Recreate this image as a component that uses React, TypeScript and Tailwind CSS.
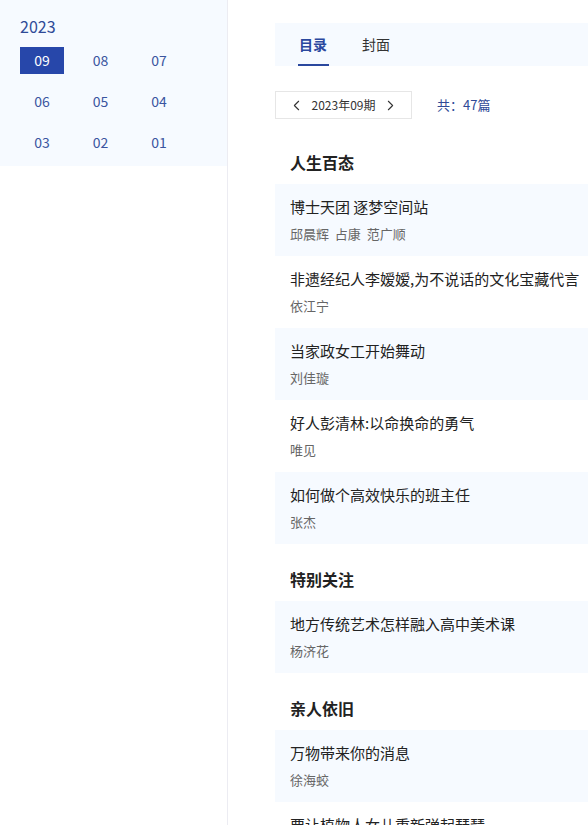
import { ChevronLeft, ChevronRight } from 'lucide-react';

const months = ['09', '08', '07', '06', '05', '04', '03', '02', '01'];

const sections = [
  {
    name: '人生百态',
    items: [
      { title: '博士天团 逐梦空间站', author: '邱晨辉  占康  范广顺' },
      { title: '非遗经纪人李嫒嫒,为不说话的文化宝藏代言', author: '依江宁' },
      { title: '当家政女工开始舞动', author: '刘佳璇' },
      { title: '好人彭清林:以命换命的勇气', author: '唯见' },
      { title: '如何做个高效快乐的班主任', author: '张杰' },
    ],
  },
  {
    name: '特别关注',
    items: [{ title: '地方传统艺术怎样融入高中美术课', author: '杨济花' }],
  },
  {
    name: '亲人依旧',
    items: [
      { title: '万物带来你的消息', author: '徐海蛟' },
      { title: '要让植物人女儿重新弹起琵琶', author: '' },
    ],
  },
];

export default function App() {
  return (
    <div
      className="flex w-[588px] h-[825px] overflow-hidden bg-white"
      style={{ fontFamily: '"Noto Sans CJK SC", "Noto Sans", sans-serif' }}
    >
      <div className="w-[228px] shrink-0 border-r border-[#ececf2]">
        <div className="bg-[#f6faff] h-[166px] pl-5 pt-[14px]">
          <p className="text-[16px] leading-[24px] text-[#2f4a97]">2023</p>
          <div className="grid grid-cols-[44px_44px_44px] gap-x-[14.5px] gap-y-[14px] mt-[9px]">
            {months.map((m) => (
              <div
                key={m}
                className={
                  m === '09'
                    ? 'h-[27px] flex items-center justify-center text-[14px] bg-[#2747aa] text-white'
                    : 'h-[27px] flex items-center justify-center text-[14px] text-[#3a55a0]'
                }
              >
                {m}
              </div>
            ))}
          </div>
        </div>
      </div>

      <div className="w-[800px] shrink-0 pl-[47px] pt-[23px]">
        <div className="h-[43px] bg-[#f6faff] flex items-end pl-[22px] gap-[33px]">
          <div className="flex flex-col items-center">
            <span className="text-[14px] leading-[20px] font-bold text-[#2a489e] px-[2px]">目录</span>
            <div className="h-[2px] w-[31px] bg-[#2a489e] mt-[10px]" />
          </div>
          <div className="flex flex-col items-center">
            <span className="text-[14px] leading-[20px] text-[#333]">封面</span>
            <div className="h-[2px] mt-[10px]" />
          </div>
        </div>

        <div className="flex items-center mt-[25px]">
          <div className="w-[137px] h-[28px] border border-[#e6e6e6] flex items-center justify-center gap-[5px] text-[#333]">
            <ChevronLeft size={17} strokeWidth={1.5} />
            <span className="text-[12px] leading-none px-[2px]">2023年09期</span>
            <ChevronRight size={17} strokeWidth={1.5} />
          </div>
          <span className="ml-[25px] text-[13px] text-[#2f4a97]">共：47篇</span>
        </div>

        <div className="pt-[32px]">
          {sections.map((s, si) => (
            <div key={s.name} className={si > 0 ? 'pt-[24px]' : ''}>
              <h2 className="text-[16px] leading-[22px] font-bold text-[#222] pl-[15px] mb-[11px]">{s.name}</h2>
              {s.items.map((it, i) => (
                <div
                  key={it.title}
                  className={
                    (i % 2 === 0 ? 'bg-[#f6faff] ' : 'bg-white ') +
                    'h-[72px] pl-[15px] pt-[12px]'
                  }
                >
                  <p className="text-[15px] leading-[22px] text-[#222]">{it.title}</p>
                  <p className="text-[13px] leading-[20px] text-[#666] mt-[6px] whitespace-pre">{it.author}</p>
                </div>
              ))}
            </div>
          ))}
        </div>
      </div>
    </div>
  );
}
